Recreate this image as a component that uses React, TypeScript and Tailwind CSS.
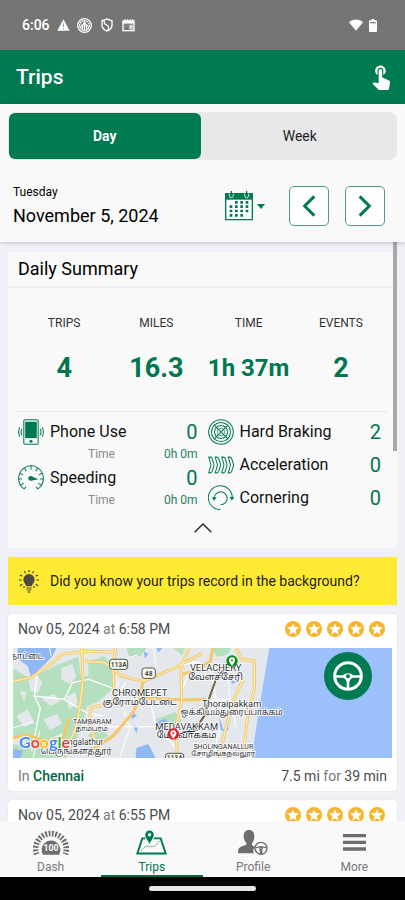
import React from 'react';
import { MdTouchApp } from 'react-icons/md';

const GREEN = '#007a53';

const StatusBar = () => (
  <div className="flex h-[50px] shrink-0 items-center justify-between bg-[#757575] pr-7 pl-[22px] text-white">
    <div className="flex items-center gap-[7px]">
      <span className="text-[14px] font-medium">6:06</span>
      <svg width="13" height="12" viewBox="0 0 39 36">
        <path d="M19.5 1 38 35H1z" fill="#fff" />
        <path d="M19.5 13v11M19.5 27v4" stroke="#999" strokeWidth="3" />
      </svg>
      <svg width="15" height="15" viewBox="0 0 46 46" fill="none" stroke="#fff">
        <circle cx="23" cy="23" r="21" strokeWidth="4" />
        <circle cx="23" cy="23" r="15" strokeWidth="4" strokeDasharray="6 1.5" />
        <path d="M23 10v28M16 36c0-12 2-18 7-24 5 6 7 12 7 24M10 32c1-7 4-10 8-12M36 32c-1-7-4-10-8-12" strokeWidth="3.5" />
      </svg>
      <svg className="ml-0.5" width="12" height="14" viewBox="0 0 36 42" fill="none" stroke="#fff" strokeWidth="4">
        <path d="M18 3 3 8v13c0 9 6 15 15 18 9-3 15-9 15-18V8z" />
        <path d="M10 7c-2 7 0 11 7 14s8 9 3 16" />
      </svg>
      <svg className="ml-0.5" width="13" height="13" viewBox="0 0 40 38">
        <path d="M1 3h38v34H1z" fill="#fff" />
        <path d="M5 13h30v20H5z" fill="#8a8a8a" />
        <path d="M7 16h13v4H7zM7 24h13v7H7z" fill="#757575" />
        <path d="M23 17h10v14H23z" fill="#ddd" />
        <path d="M7 0h4v5H7zM15 0h4v5h-4zM23 0h4v5h-4zM31 0h4v5h-4z" fill="#fff" />
      </svg>
    </div>
    <div className="flex items-center gap-1.5">
      <svg width="14" height="12" viewBox="0 0 44 36">
        <path d="M0 9C12-2 32-2 44 9L22 36z" fill="#fff" />
      </svg>
      <svg width="8" height="13" viewBox="0 0 24 39">
        <path d="M8 0h8v4h5a3 3 0 0 1 3 3v29a3 3 0 0 1-3 3H3a3 3 0 0 1-3-3V7a3 3 0 0 1 3-3h5z" fill="#fff" />
        <path d="M4 9h16v4H4z" fill="#757575" />
      </svg>
    </div>
  </div>
);

const CalendarIcon = () => (
  <svg width="28" height="30" viewBox="0 0 84 90">
    <path d="M2 8h80v78H2z" fill="#fff" stroke={GREEN} strokeWidth="4" />
    <path d="M0 6h84v20H0z" fill={GREEN} />
    <path d="M13 8v6a6 6 0 0 0 12 0V8M59 8v6a6 6 0 0 0 12 0V8" fill="none" stroke="#f8f8f8" strokeWidth="2.5" />
    <path d="M19 0v14M65 0v14" stroke={GREEN} strokeWidth="4" />
    <g stroke={GREEN} strokeWidth="8" strokeDasharray="8 8">
      <path d="M30 34h40" />
      <path d="M14 47h56" />
      <path d="M14 60h56" />
      <path d="M14 73h40" />
    </g>
  </svg>
);

const Chevron = ({ d }: { d: string }) => (
  <svg width="14" height="22" viewBox="0 0 42 66" fill="none" stroke={GREEN} strokeWidth="9">
    <path d={d} />
  </svg>
);

const DateHeader = () => (
  <section className="relative z-10 shrink-0 bg-[#f9f9f9] px-2 pt-2 pb-3.5 shadow-[0_1px_4px_rgba(0,0,0,0.2)]">
    <div className="grid grid-cols-2 rounded-lg bg-[#e8e8ea] text-[14px] text-[#222]">
      <button className="my-px mr-0.5 ml-px h-[46px] rounded-md bg-[#007a53] font-bold text-white">Day</button>
      <button className="h-12">Week</button>
    </div>
    <div className="mt-6 flex items-center pr-1 pl-[5px] text-black">
      <div className="flex-1">
        <p className="text-[12px] leading-4">Tuesday</p>
        <p className="mt-1 text-[18px] leading-6">November 5, 2024</p>
      </div>
      <button className="mr-6 flex items-center gap-1" aria-label="Pick a date">
        <CalendarIcon />
        <svg width="8" height="5" viewBox="0 0 24 15">
          <path d="M0 0h24L12 15z" fill={GREEN} />
        </svg>
      </button>
      <button className="mr-4 flex size-10 items-center justify-center rounded-[5px] border border-[#4ba083] bg-white" aria-label="Previous day">
        <Chevron d="M37 4 8 33l29 29" />
      </button>
      <button className="mr-2 flex size-10 items-center justify-center rounded-[5px] border border-[#4ba083] bg-white" aria-label="Next day">
        <Chevron d="m5 4 29 29L5 62" />
      </button>
    </div>
  </section>
);

const PhoneIcon = () => (
  <svg width="26" height="26" viewBox="0 0 76 76" fill="none" stroke={GREEN} strokeWidth="3">
    <rect x="17" y="2" width="42" height="72" rx="4" />
    <path d="M21 8h34v48H21z" fill={GREEN} stroke="none" />
    <circle cx="38" cy="65" r="4.5" fill={GREEN} stroke="none" />
    <path d="M11 28q-4 10 0 20M5 24q-6 14 0 28M65 28q4 10 0 20M71 24q6 14 0 28" />
  </svg>
);

const SpeedIcon = () => (
  <svg width="26" height="26" viewBox="0 0 76 76" fill="none" stroke={GREEN} strokeWidth="3">
    <path d="M18 70C-4 54-3 24 17 9c14-9 30-9 42 0 20 15 21 45-1 61" />
    <path d="M38 2v12M19 9l5 9M57 9l-5 9M6 24l9 5M70 24l-9 5M2 41h10M74 41H64M9 58l8-5M67 58l-8-5M18 71l5-7M58 71l-5-7" />
    <circle cx="37" cy="39" r="7" fill={GREEN} stroke="none" />
    <path d="m38 33 22 9-22 4z" fill={GREEN} stroke="none" />
  </svg>
);

const BrakeIcon = () => (
  <svg width="26" height="26" viewBox="0 0 76 76" fill="none" stroke={GREEN} strokeWidth="3">
    <circle cx="38" cy="38" r="36" />
    <circle cx="38" cy="38" r="28" />
    <circle cx="38" cy="38" r="19" />
    <circle cx="38" cy="38" r="11" strokeWidth="2" />
    <path d="m18 18 40 40M58 18 18 58" />
  </svg>
);

const AccelIcon = () => (
  <svg width="26" height="18" viewBox="0 0 76 52" fill="none" stroke={GREEN} strokeWidth="3" strokeLinejoin="round">
    {[0, 19, 38, 57].map((x) => (
      <path key={x} transform={`translate(${x})`} d="M2 3h5q4 0 5 4l5 15q1 4 0 8l-5 15q-1 4-5 4H2l6-20q1-3 0-6z" />
    ))}
  </svg>
);

const CornerIcon = () => (
  <svg width="26" height="26" viewBox="0 0 76 76" fill="none" stroke={GREEN} strokeWidth="3">
    <path d="M36 72A35 35 0 1 1 71 38" />
    <path d="M18 38a19 19 0 1 1 19 20" />
    <path d="M63 35h14l-7 10zM11 36h14l-7 10z" fill={GREEN} stroke="none" />
  </svg>
);

const totals = [
  { label: 'TRIPS', value: '4', size: 'text-[27px]' },
  { label: 'MILES', value: '16.3', size: 'text-[27px]' },
  { label: 'TIME', value: '1h 37m', size: 'text-[24px]' },
  { label: 'EVENTS', value: '2', size: 'text-[27px]' },
];

const leftStats = [
  { name: 'Phone Use', icon: <PhoneIcon /> },
  { name: 'Speeding', icon: <SpeedIcon /> },
];

const rightStats = [
  { name: 'Hard Braking', icon: <BrakeIcon />, count: 2 },
  { name: 'Acceleration', icon: <AccelIcon />, count: 0 },
  { name: 'Cornering', icon: <CornerIcon />, count: 0 },
];

const DailySummary = () => (
  <section className="bg-[#f9f9f9]">
    <h2 className="border-b-2 border-[#eeeef0] px-2.5 text-[18px] leading-[34px] text-black">Daily Summary</h2>
    <div className="px-2.5">
      <div className="grid grid-cols-4 border-b border-[#e9e9eb] pt-[27px] pb-[25px] text-center">
        {totals.map((t) => (
          <div key={t.label}>
            <p className="text-[12px] leading-4 text-[#333]">{t.label}</p>
            <p className={`mt-[19px] leading-9 font-bold whitespace-nowrap text-[#00764f] ${t.size}`}>{t.value}</p>
          </div>
        ))}
      </div>
      <div className="grid grid-cols-2 gap-2.5 pt-1">
        <div>
          {leftStats.map((s) => (
            <div key={s.name} className="mb-0.5">
              <div className="flex h-8 items-center">
                {s.icon}
                <span className="ml-1.5 flex-1 text-[16px] text-[#111]">{s.name}</span>
                <span className="text-[20px] text-[#00764f]">0</span>
              </div>
              <div className="flex justify-between pl-[70px] text-[12px] leading-3">
                <span className="text-[#8c8c8c]">Time</span>
                <span className="text-[#1d7f5f]">0h 0m</span>
              </div>
            </div>
          ))}
        </div>
        <div className="flex flex-col gap-px">
          {rightStats.map((s) => (
            <div key={s.name} className="flex h-8 items-center pr-1.5">
              {s.icon}
              <span className="ml-1.5 flex-1 text-[16px] text-[#111]">{s.name}</span>
              <span className="text-[20px] text-[#00764f]">{s.count}</span>
            </div>
          ))}
        </div>
      </div>
    </div>
    <button className="flex h-[34px] w-full items-center justify-center pb-1.5" aria-label="Collapse summary">
      <svg width="18" height="10" viewBox="0 0 54 30" fill="none" stroke="#222" strokeWidth="4">
        <path d="M2 28 27 3l25 25" />
      </svg>
    </button>
  </section>
);

const TipBanner = () => (
  <div className="flex h-12 items-center gap-[11px] bg-[#ffeb34] pl-[11px] text-[14px] text-[#1c1c10]">
    <svg width="20" height="23" viewBox="0 0 60 69">
      <path d="M30 12a17 17 0 0 1 17 17c0 8-7 12-9 20H22c-2-8-9-12-9-20a17 17 0 0 1 17-17z" fill="#4a4a42" />
      <path d="M22 51h16v8l-4 4h-8l-4-4z" fill="#a99c32" />
      <path d="M26 64h8v4h-8z" fill="#5d5728" />
      <path d="M30 0v7M16 4l3 6M44 4l-3 6M3 15l7 4M57 15l-7 4M0 30h8M60 30h-8M3 47l7-4M57 47l-7-4M13 53l4-4M47 53l-4-4" stroke="#3c3a20" strokeWidth="3.5" />
    </svg>
    <p>Did you know your trips record in the background?</p>
  </div>
);

const StarBadge = () => (
  <svg width="16" height="16" viewBox="0 0 48 48">
    <circle cx="24" cy="24" r="24" fill="#f9b42d" />
    <path d="m24 7 5 11 13 1-10 9 3 13-11-7-11 7 3-13-10-9 13-1z" fill="#fff" />
  </svg>
);

const Wheel = () => (
  <svg width="30" height="30" viewBox="0 0 90 90" fill="none" stroke="#fff">
    <circle cx="45" cy="45" r="40" strokeWidth="9" />
    <path d="M7 43h22q16-12 32 0h22v7H62q-12 2-13 14v20h-8V64q-1-12-13-14H7z" fill="#fff" stroke="none" />
    <circle cx="45" cy="46" r="6" fill={GREEN} stroke="none" />
  </svg>
);

const TripMap = () => (
  <svg className="block h-[110px] w-full" viewBox="0 0 1137 330" preserveAspectRatio="xMidYMid slice" role="img" aria-label="Trip route map">
    <rect width="1137" height="330" fill="#e4e7eb" />
    <g fill="#b4e0c0">
      <path d="M0 62l50 28 80-38 66-26 8 60 90-12 10 44-46 42-36 14-12 46-22 60-30 50H0z" />
      <path d="M225 42l48-18 28 34-6 50-66 18zM340 0h60l-18 24-32 4zM480 0h36l-8 22zM600 0h54l-10 20-34 6z" />
      <path d="M428 214l58-22 22 30-30 16-44 6zM225 262l36-22 26 24-40 22z" />
    </g>
    <g fill="#e4e7eb">
      <path d="M46 96l22-20 20 28-14 30-22-6zM84 152l40-14 16 22-26 14zM146 60l32-12 12 38-20 22-26-14zM10 204l34-20 20 40-30 14zM92 214l42-16 12 30-36 18zM160 148l26-16 8 34-26 18zM20 128l20 4-6 30z" />
      <path d="M0 262l40 10-8 20-32-4zM110 272l40-18 6 32-34 10z" />
    </g>
    <g fill="#8fb8f5">
      <path d="M14 0h116l-10 22-24 26-42 40-10-34-30-22z" />
      <path d="M0 302l30 6-8 22H0zM370 300l36-12 22 42h-60zM434 220l26-8 6 34-22 10zM315 152l20 14-16 8zM352 192l20 10-14 12z" />
      <path d="M430 0h18l-12 14zM620 210l10 34 20-6-12 14-16-6zM360 232l16 2-6 22zM392 10l14 8-10 14zM653 96l18 6-14 6zM522 232l16 4 4 24-18-2z" />
    </g>
    <path d="M769 0C752 100 728 240 717 330h420V0z" fill="#9cc0fa" />
    <g fill="none" stroke="#fff" strokeWidth="4">
      <path d="M72 80l-8 64 18 36-26 130M64 144l90 10 66 40 50 10M154 154l24-50 50-10 80 30 80 10M240 236h220M300 160l40-60M410 150l20 90 60 60M540 40l-30 80M560 158l90-4M470 60l90-20M620 240l-20 90M590 40l20 120" />
      <path d="M315 40l60-20M318 100l-30 90M330 180l20 60-30 90M430 60l-8-60M640 30l10 120 20 90M0 240l60-20M60 330l20-80M110 0l4 24" strokeWidth="3" />
    </g>
    <g fill="none" stroke="#f3c868" strokeWidth="9">
      <path d="M0 100l56-12 52-36 42-34 64-8 90 2" />
      <path d="M206 0l4 90-6 60-12 80-44 100" />
      <path d="M308 0l-8 60 2 50 6 50-74 20-6 40 20 60" />
      <path d="M216 40l60 4 50 40 66 16 92-40 84-44" />
      <path d="M390 100l-10 50-20 44-60 70-60 40" />
      <path d="M385 150l130 6 65-2" />
      <path d="M528 0l-24 60 2 100-18 80 6 90" />
      <path d="M600 0l-8 40-50 30-40 10" />
      <path d="M0 270l40-10 60 20 50-10 20-60" />
      <path d="M670 0l16 34 38 4 0 86-20 78-14 128M690 96l-30 64-24 90-16 80" />
    </g>
    <g fill="none" stroke="#fdeab5" strokeWidth="4">
      <path d="M0 100l56-12 52-36 42-34 64-8 90 2M206 0l4 90-6 60-12 80-44 100M308 0l-8 60 2 50 6 50-74 20-6 40 20 60M216 40l60 4 50 40 66 16 92-40 84-44M528 0l-24 60 2 100-18 80 6 90" />
      <path d="M670 0l16 34 38 4 0 86-20 78-14 128M690 96l-30 64-24 90-16 80" />
    </g>
    <path d="M657 44l-46 44-22 62-14 52-32 48-34 4-26 10" fill="none" stroke="#222" strokeWidth="5" />
    <path d="M657 44l-46 44-22 62-14 52-32 48" fill="none" stroke="#d3a64b" strokeWidth="2" />
    <g fill="#fffef2" stroke="#46584a" strokeWidth="3" fontFamily="Roboto, sans-serif" fontSize="20" fontWeight="700" textAnchor="middle">
      <rect x="290" y="34" width="54" height="30" rx="8" />
      <rect x="387" y="60" width="40" height="31" rx="8" />
      <rect x="458" y="316" width="54" height="30" rx="8" />
      <g fill="#444" stroke="none">
        <text x="317" y="56">113A</text>
        <text x="407" y="83">48</text>
        <text x="485" y="337">113A</text>
      </g>
    </g>
    <g fill="#2d3033" stroke="#fff" strokeWidth="5" strokeLinejoin="round" paintOrder="stroke" textAnchor="middle" fontFamily="Roboto, 'Noto Sans Tamil', 'Noto Sans', sans-serif">
      <g fontSize="28">
        <text x="380" y="143">CHROMEPET</text>
        <text x="380" y="170">குரோம்பேட்டை</text>
        <text x="608" y="69">VELACHERY</text>
        <text x="608" y="96">வேளச்சேரி</text>
        <text x="521" y="246">MEDAVAKKAM</text>
        <text x="521" y="271">மேடவாக்கம்</text>
        <text x="656" y="176">Thoraipakkam</text>
      </g>
      <g fontSize="25">
        <text x="656" y="201">ஒக்கியம்துரைப்பாக்கம்</text>
        <text x="42" y="32">நாட்டை</text>
        <text x="190" y="317">பெருங்களத்தூர்</text>
        <text x="218" y="292">ngalathur</text>
      </g>
      <g fontSize="21">
        <text x="238" y="229">TAMBARAM</text>
        <text x="236" y="249">தாம்பரம்</text>
        <text x="631" y="304">SHOLINGANALLUR</text>
        <text x="631" y="324">சோழிங்கநல்லூர்</text>
      </g>
    </g>
    <text x="18" y="299" fontSize="48" fontFamily="Lato, sans-serif" fontWeight="700" stroke="#fff" strokeWidth="5" paintOrder="stroke">
      <tspan fill="#4285f4">G</tspan><tspan fill="#ea4335">o</tspan><tspan fill="#fbbc05">o</tspan><tspan fill="#4285f4">g</tspan><tspan fill="#34a853">l</tspan><tspan fill="#ea4335">e</tspan>
    </text>
    <g>
      <circle cx="657" cy="39" r="17" fill="#0b8a1c" />
      <path d="M657 54c-5-8-9-11-9-17a9 9 0 0 1 18 0c0 6-4 9-9 17z" fill="#fff" />
      <circle cx="657" cy="37" r="3" fill="#0b8a1c" />
      <circle cx="481" cy="258" r="17" fill="#e0202f" />
      <path d="M481 273c-5-8-9-11-9-17a9 9 0 0 1 18 0c0 6-4 9-9 17z" fill="#fff" />
      <circle cx="481" cy="256" r="3" fill="#e0202f" />
    </g>
  </svg>
);

const TripCard = ({ time, children }: { time: string; children?: React.ReactNode }) => (
  <article className="rounded-[3px] bg-white text-[14px] text-[#4a4a4a] shadow-[0_0_1px_rgba(0,0,0,0.2)]">
    <header className="flex h-[34px] items-center justify-between pr-3 pb-1 pl-2.5">
      <p>
        Nov 05, 2024 <span className="text-[#777]">at</span> {time}
      </p>
      <div className="flex gap-[5px]" role="img" aria-label="5 of 5 stars">
        {[1, 2, 3, 4, 5].map((n) => (
          <StarBadge key={n} />
        ))}
      </div>
    </header>
    {children}
  </article>
);

const TripDetails = () => (
  <>
    <div className="relative px-[5px]">
      <TripMap />
      <button className="absolute top-1 right-[25px] flex size-12 items-center justify-center rounded-full bg-[#007a53]" aria-label="Driver">
        <Wheel />
      </button>
    </div>
    <footer className="flex h-[33px] items-center justify-between px-2.5 pt-1">
      <p className="text-[#777]">
        In <a href="#chennai" className="font-medium text-[#00693f]">Chennai</a>
      </p>
      <p>
        7.5 mi <span className="text-[#777]">for</span> 39 min
      </p>
    </footer>
  </>
);

const DashIcon = () => (
  <svg width="36" height="26" viewBox="0 0 108 78">
    <path d="M11 73A46 46 0 1 1 97 73" fill="none" stroke="#6d6d70" strokeWidth="17" strokeDasharray="5.5 4.6" />
    <path d="M30 74a28 28 0 1 1 48 0z" fill="#6d6d70" />
    <text x="54" y="63" fill="#fff" fontSize="26" fontWeight="700" textAnchor="middle" fontFamily="Roboto, sans-serif">100</text>
  </svg>
);

const TripsIcon = () => (
  <svg width="31" height="25" viewBox="0 0 94 75" fill="none" stroke={GREEN}>
    <path d="M28 25h-9L4 71h86L75 25H54" strokeWidth="6" />
    <path d="M16 63q10-16 20-14t18 0 16-16" strokeWidth="2.5" strokeDasharray="4 3" />
    <path d="M41 42C36 30 28 24 28 14a13 13 0 0 1 26 0c0 10-8 16-13 28z" fill={GREEN} stroke="none" />
    <circle cx="41" cy="14" r="5" fill="#f9f9f9" stroke="none" />
  </svg>
);

const ProfileIcon = () => (
  <svg width="30" height="26" viewBox="0 0 90 78">
    <path d="M33 0c11 0 16 8 16 19 0 10-3 17-7 21v6c5 3 8 4 9 5-7 8-5 14-3 19H0c0-12 2-17 9-20l16-6v-5c-4-4-8-10-8-20C17 8 22 0 33 0z" fill="#6d6d70" />
    <g fill="none" stroke="#6d6d70" strokeWidth="4">
      <circle cx="69" cy="55" r="18" />
      <circle cx="69" cy="55" r="4" />
      <path d="M52 54q17-7 34 0M67 72V60M71 72V60" />
    </g>
  </svg>
);

const MoreIcon = () => (
  <svg width="23" height="17" viewBox="0 0 69 51" stroke="#6d6d70" strokeWidth="10">
    <path d="M0 5h69M0 25h69M0 45h69" />
  </svg>
);

const navItems = [
  { label: 'Dash', icon: <DashIcon /> },
  { label: 'Trips', icon: <TripsIcon />, active: true },
  { label: 'Profile', icon: <ProfileIcon /> },
  { label: 'More', icon: <MoreIcon /> },
];

const BottomNav = () => (
  <nav className="flex h-14 shrink-0 bg-[#f9f9f9]">
    {navItems.map((item) => (
      <a
        key={item.label}
        href={`#${item.label.toLowerCase()}`}
        className={`flex flex-1 flex-col items-center border-b-2 pt-2 text-[12px] leading-4 ${
          item.active ? 'border-[#00693f] text-[#00764f]' : 'border-transparent text-[#77777a]'
        }`}
      >
        <span className="flex h-7 items-center">{item.icon}</span>
        <span className="mt-[3px]">{item.label}</span>
      </a>
    ))}
  </nav>
);

const App = () => {
  return (
    <div className="flex h-screen flex-col overflow-hidden bg-[#f0f0f7] font-[Roboto,sans-serif]">
      <StatusBar />
      <header className="flex h-[54px] shrink-0 items-center justify-between bg-[#007a53] pr-2.5 pl-4 text-white">
        <h1 className="pt-0.5 text-[21px] font-medium">Trips</h1>
        <button className="pb-0.5" aria-label="Log a trip">
          <MdTouchApp size={28} />
        </button>
      </header>
      <DateHeader />
      <main className="relative min-h-0 flex-1 overflow-hidden">
        <div className="flex flex-col gap-[9px] px-2 pt-2.5">
          <DailySummary />
          <TipBanner />
          <TripCard time="6:58 PM">
            <TripDetails />
          </TripCard>
          <TripCard time="6:55 PM" />
        </div>
        <div className="absolute top-0 right-2 h-[209px] w-1 bg-[#a9a9ab]" />
      </main>
      <BottomNav />
      <div className="flex h-[23px] shrink-0 justify-center bg-black pt-[9px]">
        <div className="h-[5px] w-[107px] rounded-full bg-[#e6e6e6]" />
      </div>
    </div>
  );
};

export default App;
